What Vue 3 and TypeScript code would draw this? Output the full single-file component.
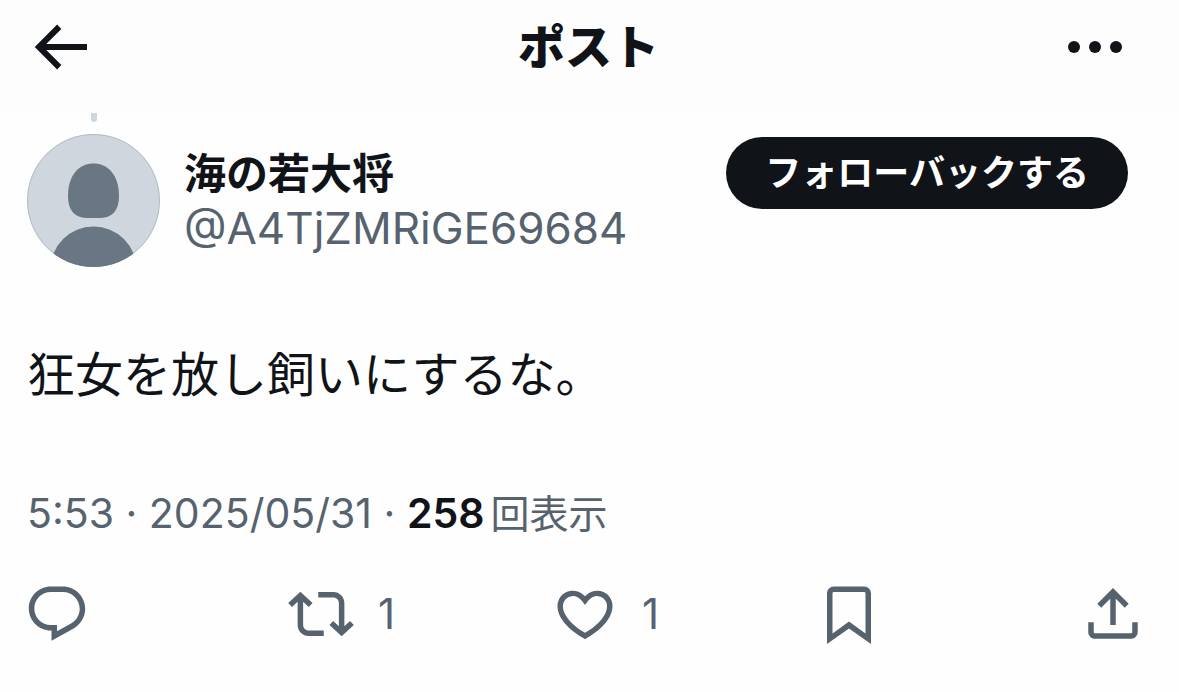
<script setup lang="ts">
interface Action {
  name: string
  label: string
  path: string
  count?: number
}

const actions: Action[] = [
  {
    name: 'reply',
    label: '返信',
    path: 'M1.751 10c0-4.42 3.584-8 8.005-8h4.366c4.49 0 8.129 3.64 8.129 8.13 0 2.96-1.607 5.68-4.196 7.11l-8.054 4.46v-3.69h-.067c-4.49.1-8.183-3.51-8.183-8.01zm8.005-6c-3.317 0-6.005 2.69-6.005 6 0 3.37 2.77 6.08 6.138 6.01l.351-.01h1.761v2.3l5.087-2.81c1.951-1.08 3.163-3.13 3.163-5.36 0-3.39-2.744-6.13-6.129-6.13H9.756z',
  },
  {
    name: 'repost',
    label: 'リポスト',
    count: 1,
    path: 'M4.5 3.88l4.432 4.14-1.364 1.46L5.5 7.55V16c0 1.1.896 2 2 2H13v2H7.5c-2.209 0-4-1.79-4-4V7.55L1.432 9.48.068 8.02 4.5 3.88zM16.5 6H11V4h5.5c2.209 0 4 1.79 4 4v8.45l2.068-1.93 1.364 1.46-4.432 4.14-4.432-4.14 1.364-1.46 2.068 1.93V8c0-1.1-.896-2-2-2z',
  },
  {
    name: 'like',
    label: 'いいね',
    count: 1,
    path: 'M16.697 5.5c-1.222-.06-2.679.51-3.89 2.16l-.805 1.09-.806-1.09C9.984 6.01 8.526 5.44 7.304 5.5c-1.243.07-2.349.78-2.91 1.91-.552 1.12-.633 2.78.479 4.82 1.074 1.97 3.257 4.27 7.129 6.61 3.87-2.34 6.052-4.64 7.126-6.61 1.111-2.04 1.03-3.7.477-4.82-.561-1.13-1.666-1.84-2.908-1.91zm4.187 7.69c-1.351 2.48-4.001 5.12-8.379 7.67l-.503.3-.504-.3c-4.379-2.55-7.029-5.19-8.382-7.67-1.36-2.5-1.41-4.86-.514-6.67.887-1.79 2.647-2.91 4.601-3.01 1.651-.09 3.368.56 4.798 2.01 1.429-1.45 3.146-2.1 4.796-2.01 1.954.1 3.714 1.22 4.601 3.01.896 1.81.846 4.17-.514 6.67z',
  },
  {
    name: 'bookmark',
    label: 'ブックマーク',
    path: 'M4 4.5C4 3.12 5.119 2 6.5 2h11C18.881 2 20 3.12 20 4.5v18.44l-8-5.71-8 5.71V4.5zM6.5 4c-.276 0-.5.22-.5.5v14.56l6-4.29 6 4.29V4.5c0-.28-.224-.5-.5-.5h-11z',
  },
  {
    name: 'share',
    label: '共有',
    path: 'M12 2.59l5.7 5.7-1.41 1.42L13 6.41V16h-2V6.41l-3.3 3.3-1.41-1.42L12 2.59zM21 15l-.02 3.51c0 1.38-1.12 2.49-2.5 2.49H5.5C4.11 21 3 19.88 3 18.5V15h2v3.5c0 .28.22.5.5.5h12.98c.28 0 .5-.22.5-.5L19 15h2z',
  },
]
</script>

<template>
  <div class="page">
    <header class="topbar">
      <button class="icon-button" type="button" aria-label="戻る">
        <svg viewBox="0 0 24 24" aria-hidden="true">
          <path d="M7.414 13l5.043 5.04-1.414 1.42L3.586 12l7.457-7.46 1.414 1.42L7.414 11H21v2H7.414z" />
        </svg>
      </button>
      <h1 class="title">ポスト</h1>
      <button class="icon-button more" type="button" aria-label="もっと見る">
        <svg viewBox="0 0 24 24" aria-hidden="true">
          <circle cx="5" cy="12" r="2" />
          <circle cx="12" cy="12" r="2" />
          <circle cx="19" cy="12" r="2" />
        </svg>
      </button>
    </header>

    <article class="post">
      <div class="author">
        <div class="avatar-column">
          <span class="thread-line"></span>
          <svg class="avatar" viewBox="0 0 133 133" role="img" aria-label="プロフィール画像">
            <defs>
              <clipPath id="avatar-clip"><circle cx="66.5" cy="66.5" r="66.5" /></clipPath>
            </defs>
            <g clip-path="url(#avatar-clip)">
              <rect width="133" height="133" fill="#cfd6de" />
              <path
                d="M66.5 29.5C80 29.5 92 40 92 62C92 77 85 84 72 84H61C48 84 41 77 41 62C41 40 53 29.5 66.5 29.5Z"
                fill="#697684"
              />
              <circle cx="66.5" cy="135.5" r="43" fill="#697684" />
            </g>
            <circle cx="66.5" cy="66.5" r="66" fill="none" stroke="#5b6b7a" stroke-opacity="0.25" />
          </svg>
        </div>
        <div class="names">
          <span class="name">海の若大将</span>
          <span class="handle">@A4TjZMRiGE69684</span>
        </div>
        <button class="follow" type="button">フォローバックする</button>
      </div>

      <p class="body">狂女を放し飼いにするな。</p>

      <p class="meta">
        <time datetime="2025-05-31T05:53">5:53 · 2025/05/31</time> · <strong>258</strong><span class="views">回表示</span>
      </p>

      <div class="actions">
        <button v-for="a in actions" :key="a.name" class="action" type="button" :aria-label="a.label">
          <svg viewBox="0 0 24 24" aria-hidden="true"><path :d="a.path" /></svg>
          <span v-if="a.count" class="count">{{ a.count }}</span>
        </button>
      </div>
    </article>
  </div>
</template>

<style>
body {
  background: #fefefe;
}
</style>

<style scoped>
.page {
  font-family: Inter, "Noto Sans CJK JP", sans-serif;
  color: #101318;
}

button {
  margin: 0;
  padding: 0;
  border: 0;
  background: none;
  color: inherit;
  font: inherit;
  cursor: pointer;
}

svg {
  display: block;
  fill: currentColor;
}

.topbar {
  display: grid;
  grid-template-columns: 1fr auto 1fr;
  align-items: start;
  box-sizing: border-box;
  height: 113px;
  padding: 11px 48px 0 24px;
  background: #fdfdfd;
}

.icon-button {
  width: 72px;
  height: 72px;
}

.more {
  justify-self: end;
}

.title {
  margin: 0 0 0 22px;
  font-size: 47px;
  font-weight: 900;
  line-height: 72px;
}

.author {
  display: flex;
  align-items: flex-start;
  padding: 0 51px 0 27px;
}

.avatar-column {
  display: flex;
  flex-direction: column;
  align-items: center;
  gap: 12px;
}

.thread-line {
  width: 6px;
  height: 9px;
  border-radius: 0 0 3px 3px;
  background: #cfd6dc;
}

.avatar {
  width: 133px;
  height: 133px;
}

.names {
  display: flex;
  flex: 1;
  flex-direction: column;
  min-width: 0;
  margin: 34px 0 0 24px;
}

.name {
  font-size: 42px;
  font-weight: 700;
  line-height: 54px;
}

.handle {
  color: #56636f;
  font-size: 44px;
  line-height: 54px;
}

.follow {
  flex: none;
  height: 72px;
  margin-top: 24px;
  padding: 0 39px;
  border-radius: 36px;
  background: #101318;
  color: #fff;
  font-size: 36px;
  font-weight: 700;
  line-height: 72px;
}

.body {
  margin: 72px 27px 0;
  font-size: 48px;
  line-height: 72px;
}

.meta {
  margin: 72px 27px 0;
  color: #56636f;
  font-size: 41px;
  line-height: 60px;
}

.meta strong {
  color: #101318;
  font-weight: 600;
}

.views {
  margin-left: 6px;
  font-size: 39px;
}

.actions {
  display: grid;
  grid-template-columns: repeat(4, 1fr) auto;
  margin-top: 37px;
  padding: 0 33px 0 24px;
}

.action {
  display: flex;
  align-items: center;
  gap: 24px;
  color: #56636f;
}

.action svg {
  width: 66px;
  height: 66px;
}

.count {
  font-size: 42px;
  line-height: 66px;
}
</style>
